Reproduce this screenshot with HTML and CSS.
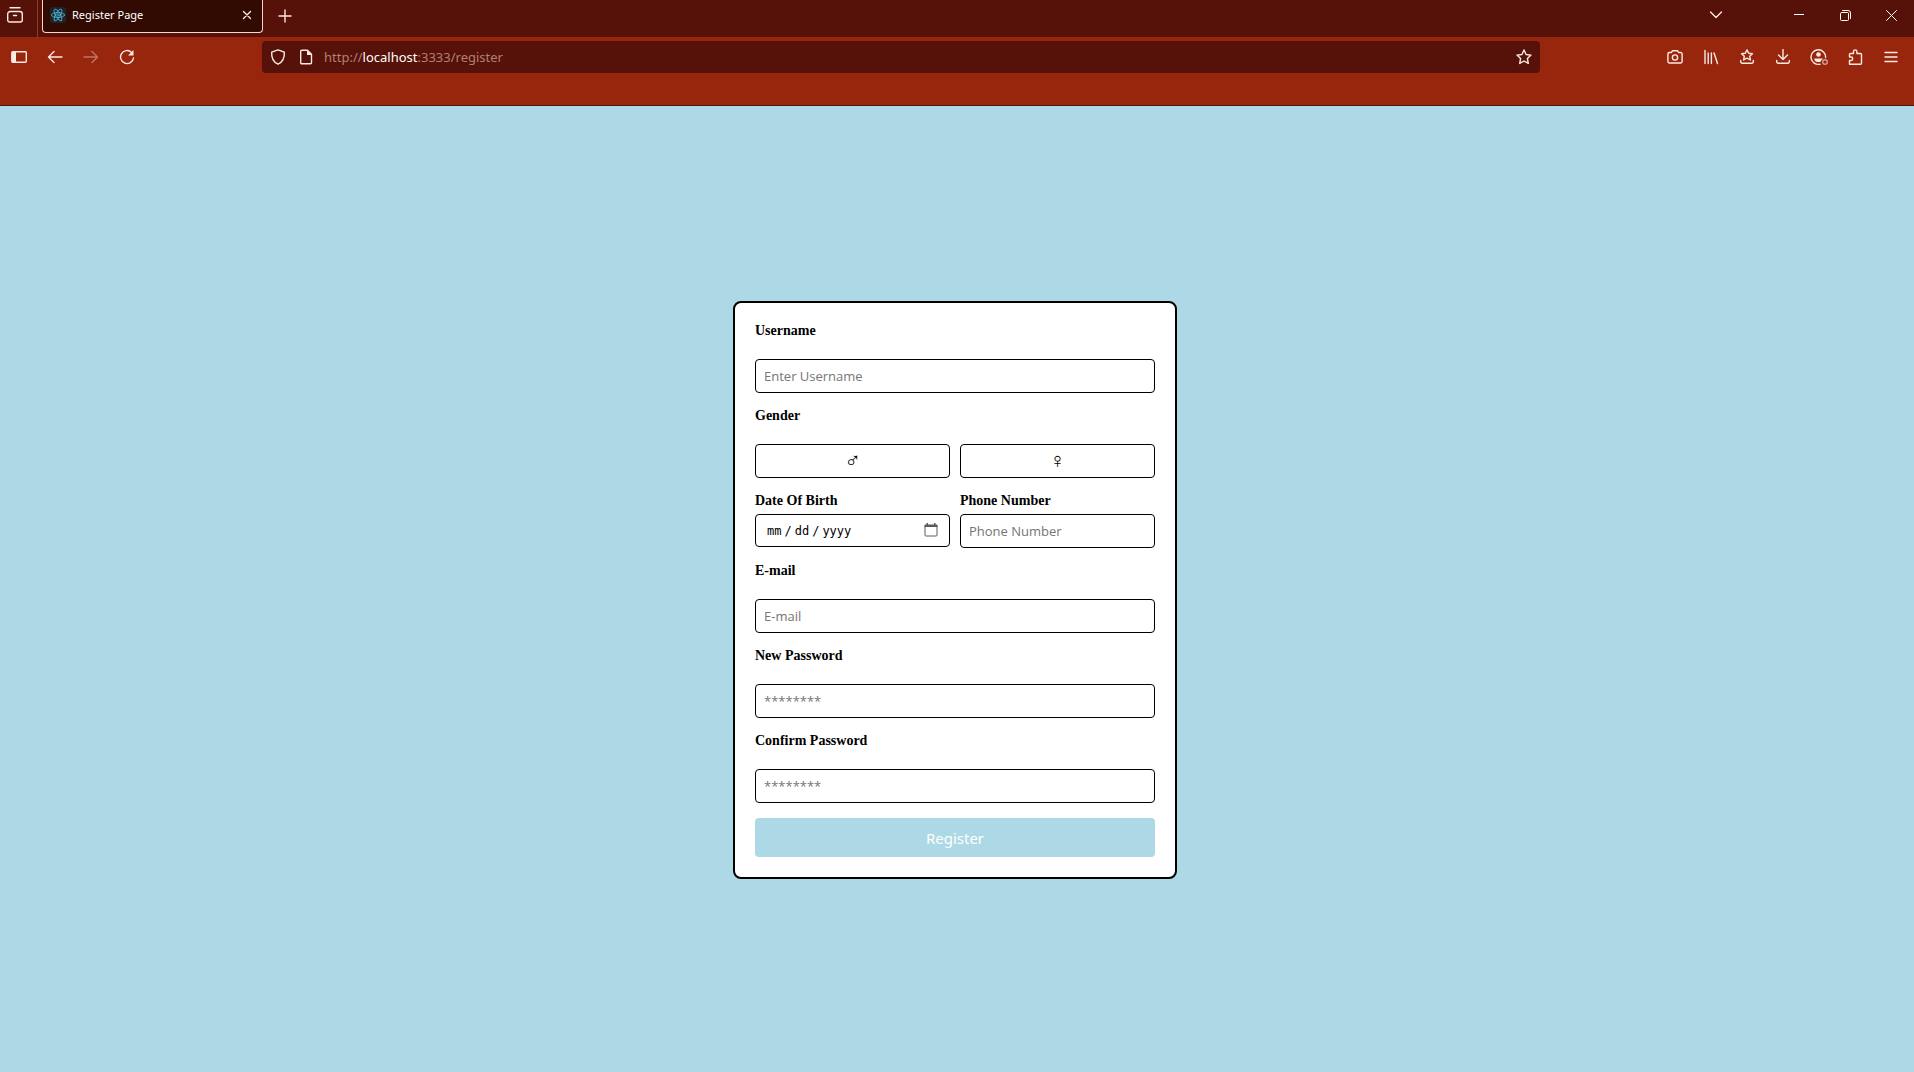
FILE: index.html
```html
<!DOCTYPE html>
<html lang="en">
<head>
<meta charset="utf-8">
<title>Register Page</title>
<link rel="stylesheet" href="styles.css">
</head>
<body>
<header class="browser">
  <div class="tabbar">
    <button class="icon-btn view-btn" aria-label="Recent browsing"><svg width="18" height="18" viewBox="0 0 18 18"><path d="M4 1.700h10M1.700 8a2.500 2.500 0 0 1 2.500-2.500h9.600A2.500 2.500 0 0 1 16.300 8v6a2 2 0 0 1-2 2H3.700a2 2 0 0 1-2-2zM7.500 9.500h3"/></svg></button>
    <div class="tab">
      <svg class="favicon" width="16" height="16" viewBox="0 0 16 16"><rect width="16" height="16" rx="2"/><ellipse cx="8" cy="8" rx="6.6" ry="2.5"/><ellipse cx="8" cy="8" rx="6.6" ry="2.5" transform="rotate(60 8 8)"/><ellipse cx="8" cy="8" rx="6.6" ry="2.5" transform="rotate(120 8 8)"/><circle cx="8" cy="8" r="1.2"/></svg>
      <span class="tab-title">Register Page</span>
      <button class="tab-close" aria-label="Close tab"><svg width="10" height="10" viewBox="0 0 10 10"><path d="M1.500 1.500l7 7M8.500 1.500l-7 7"/></svg></button>
    </div>
    <button class="icon-btn new-tab" aria-label="New tab"><svg width="14" height="14" viewBox="0 0 14 14"><path d="M7 1v12M1 7h12"/></svg></button>
    <div class="window-controls">
      <button class="all-tabs" aria-label="List all tabs"><svg width="14" height="14" viewBox="0 0 14 14"><path d="M1.500 4L7 9.500 12.500 4"/></svg></button>
      <button aria-label="Minimize"><svg class="thin" width="10" height="10" viewBox="0 0 10 10"><path d="M0 4.500h10"/></svg></button>
      <button aria-label="Restore"><svg class="thin" width="11" height="11" viewBox="0 0 11 11"><rect x=".5" y="2.500" width="8" height="8" rx="1"/><path d="M2.500.5H8A2.500 2.500 0 0 1 10.500 3v5.500"/></svg></button>
      <button aria-label="Close"><svg class="thin" width="11" height="11" viewBox="0 0 11 11"><path d="M.5.5l10 10M10.500.5l-10 10"/></svg></button>
    </div>
  </div>
  <div class="toolbar">
    <div class="tools">
      <button class="icon-btn" aria-label="Sidebar"><svg width="16" height="16" viewBox="0 0 16 16"><rect x=".8" y="2.700" width="14.500" height="10.600" rx="1"/><path class="solid" d="M1 3h4v10H1z"/></svg></button>
      <button class="icon-btn" aria-label="Back"><svg width="16" height="16" viewBox="0 0 16 16"><path d="M15 8H1.500M7 2.500L1.500 8 7 13.500"/></svg></button>
      <button class="icon-btn dim" aria-label="Forward"><svg width="16" height="16" viewBox="0 0 16 16"><path d="M1 8h13.500M9 2.500L14.500 8 9 13.500"/></svg></button>
      <button class="icon-btn" aria-label="Reload"><svg width="16" height="16" viewBox="0 0 16 16"><path d="M14.500 9A6.500 6.500 0 1 1 12.600 3.400"/><path class="solid" d="M14.500 1v5.500H9z"/></svg></button>
    </div>
    <div class="spring"></div>
    <div class="urlbar">
      <button class="url-btn" aria-label="Tracking protection"><svg width="16" height="16" viewBox="0 0 16 16"><path d="M8 .9l6.300 2.300c.4 5.500-1.700 9.800-6.300 12C3.400 13 1.300 8.700 1.700 3.200z"/></svg></button>
      <button class="url-btn" aria-label="Site information"><svg width="16" height="16" viewBox="0 0 16 16"><path d="M2.700 2.200a1 1 0 0 1 1-1H9.500L13.500 5.200v8.600a1 1 0 0 1-1 1H3.700a1 1 0 0 1-1-1z"/><path class="solid" d="M9 1v5h5z"/></svg></button>
      <div class="url">http://<span class="host">localhost</span>:3333/register</div>
      <button class="url-btn star" aria-label="Bookmark"><svg width="16" height="16" viewBox="0 0 16 16"><path d="M8 1l2.100 4.500 4.900.6-3.600 3.400.9 4.900L8 12l-4.300 2.400.9-4.900L1 6.100l4.900-.6z"/></svg></button>
    </div>
    <div class="spring"></div>
    <div class="tools">
      <button class="icon-btn" aria-label="Screenshot"><svg width="16" height="16" viewBox="0 0 16 16"><path d="M.9 5a1.500 1.500 0 0 1 1.500-1.500h2L5.500 1.700h5l1.100 1.800h2A1.500 1.500 0 0 1 15.100 5v7.500a1.500 1.500 0 0 1-1.500 1.500H2.400a1.500 1.500 0 0 1-1.500-1.500z"/><circle cx="8" cy="8.500" r="2.600"/></svg></button>
      <button class="icon-btn" aria-label="Library"><svg width="16" height="16" viewBox="0 0 16 16"><path d="M2 1.500v13M5.200 4v10.500M8.400 4v10.500M11 4l3.500 10.500"/></svg></button>
      <button class="icon-btn" aria-label="Bookmarks"><svg width="16" height="16" viewBox="0 0 16 16"><path d="M8 .9l1.700 3.300 3.700.5-2.700 2.600.7 3.700L8 9.200l-3.400 1.800.7-3.700L2.600 4.700l3.700-.5zM1.700 11.500v1.300a1.500 1.500 0 0 0 1.500 1.500h9.600a1.500 1.500 0 0 0 1.500-1.500v-1.300"/></svg></button>
      <button class="icon-btn" aria-label="Downloads"><svg width="16" height="16" viewBox="0 0 16 16"><path d="M8 .5v10M3.500 6L8 10.500 12.500 6M1.700 11.500v1.300a1.500 1.500 0 0 0 1.500 1.500h9.600a1.500 1.500 0 0 0 1.500-1.500v-1.300"/></svg></button>
      <button class="icon-btn" aria-label="Account"><svg width="18" height="18" viewBox="0 0 18 18"><path d="M10 16.200A7.300 7.300 0 1 1 15.600 9.500"/><circle class="solid" cx="8.500" cy="6.500" r="2.300"/><path class="solid" d="M4.300 10.500h8.400v.5c-1.700 1-1.500 2.500-2.700 3H7.500c-2 0-3.200-1.500-3.200-3z"/><circle class="faded" cx="15" cy="14" r="2.300"/></svg></button>
      <button class="icon-btn" aria-label="Extensions"><svg width="16" height="16" viewBox="0 0 16 16"><path d="M2.500 15.200V11.500H4a1.700 1.700 0 0 0 0-3.500H2.500V5.500a1 1 0 0 1 1-1h3V2.600a1.700 1.700 0 0 1 3.400 0v1.900h3.600a1 1 0 0 1 1 1v8.700a1 1 0 0 1-1 1z"/></svg></button>
      <button class="icon-btn" aria-label="Menu"><svg width="14" height="16" viewBox="0 0 14 16"><path d="M1 3.500h12M1 8h12M1 12.500h12"/></svg></button>
    </div>
  </div>
</header>
<main class="page">
  <form class="card">
    <div class="field">
      <label for="username">Username</label>
      <input id="username" type="text" placeholder="Enter Username">
    </div>
    <div class="field" role="group" aria-labelledby="gender">
      <span class="label" id="gender">Gender</span>
      <div class="pair">
        <button class="choice" type="button" aria-label="Male">♂</button>
        <button class="choice" type="button" aria-label="Female">♀</button>
      </div>
    </div>
    <div class="pair">
      <div class="field tight">
        <label for="dob">Date Of Birth</label>
        <div class="date-box">
          <input id="dob" type="date">
          <svg class="calendar" width="14" height="14" viewBox="0 0 14 14"><path class="outline" d="M1 3v9a1 1 0 0 0 1 1h10a1 1 0 0 0 1-1V3"/><path class="fill" d="M.4 2.500A1 1 0 0 1 1.400 1.500H2.500V0H4v1.500h6V0h1.500v1.500h1.100a1 1 0 0 1 1 1V4H.4z"/></svg>
        </div>
      </div>
      <div class="field tight">
        <label for="phone">Phone Number</label>
        <input id="phone" type="tel" placeholder="Phone Number">
      </div>
    </div>
    <div class="field">
      <label for="email">E-mail</label>
      <input id="email" type="email" placeholder="E-mail">
    </div>
    <div class="field">
      <label for="password">New Password</label>
      <input id="password" type="password" placeholder="********">
    </div>
    <div class="field">
      <label for="confirm">Confirm Password</label>
      <input id="confirm" type="password" placeholder="********">
    </div>
    <button class="submit" type="submit">Register</button>
  </form>
</main>
</body>
</html>
```
FILE: styles.css
```css
* { box-sizing: border-box; }

body {
  margin: 0;
  min-height: 100vh;
  display: flex;
  flex-direction: column;
  background: #add8e6;
  font-family: "Noto Sans", "Open Sans", sans-serif;
}

button {
  padding: 0;
  border: 0;
  background: none;
  font-family: inherit;
  color: inherit;
}

/* Browser frame */
.browser {
  background: #98260c;
  color: #fbe9e4;
  border-bottom: 1px solid #561108;
}

.browser svg {
  display: block;
  fill: none;
  stroke: currentColor;
  stroke-width: 1.4;
  stroke-linecap: round;
  stroke-linejoin: round;
}

.browser svg.thin { stroke-width: 1; color: #fff; }
.browser .solid { fill: currentColor; stroke: none; }
.browser .faded { opacity: .6; }

.browser button {
  display: flex;
  align-items: center;
  justify-content: center;
}

.tabbar {
  display: flex;
  align-items: flex-start;
  height: 37px;
  background: #561108;
}

.icon-btn {
  width: 36px;
  height: 32px;
}

.view-btn {
  width: 38px;
  height: 37px;
  padding: 0 7px 7px 0;
  border-right: 1px solid #84422f;
}

.tab {
  display: flex;
  align-items: center;
  width: 221px;
  height: 33px;
  margin-left: 4px;
  padding: 0 10px 3px 7px;
  border: 1px solid #fbd5c8;
  border-top: 0;
  border-radius: 0 0 4px 4px;
  background: #310a02;
}

.browser .favicon {
  stroke: #4cb8d6;
  stroke-width: .8;
}

.favicon rect { fill: #20232a; stroke: none; }

.tab-title {
  flex: 1;
  margin-left: 6px;
  font-size: 11px;
  line-height: 16px;
  color: #fff;
}

.tab-close { width: 10px; height: 16px; }
.new-tab { margin-left: 4px; }

.window-controls {
  display: flex;
  margin-left: auto;
}

.window-controls button {
  width: 46px;
  height: 30px;
}

.window-controls .all-tabs {
  width: 36px;
  margin-right: 42px;
}

.toolbar {
  display: flex;
  align-items: flex-start;
  height: 68px;
  padding: 4px 5px 0 1px;
}

.tools { display: flex; }
.dim { opacity: .4; }
.spring { flex: 0 1 117px; }

.urlbar {
  flex: 1;
  display: flex;
  align-items: center;
  height: 32px;
  padding: 0 2px;
  border-radius: 4px;
  background: #561108;
}

.url-btn { width: 28px; height: 28px; }

.url {
  flex: 1;
  margin-left: 4px;
  font-size: 13px;
  line-height: 20px;
  color: #b08075;
}

.host { color: #fff; }

/* Registration form */
.page {
  flex: 1;
  display: flex;
  align-items: center;
  justify-content: center;
  padding: 2px 4px 0 0;
}

.card {
  display: flex;
  flex-direction: column;
  gap: 15px;
  width: 444px;
  padding: 20px;
  border: 2px solid #000;
  border-radius: 8px;
  background: #fff;
}

.field {
  display: flex;
  flex-direction: column;
  gap: 20px;
}

.tight { gap: 5px; }

.pair {
  display: grid;
  grid-template-columns: 1fr 1fr;
  gap: 10px;
}

label,
.label {
  font: bold 14px/16px "Liberation Serif", serif;
  color: #000;
}

input,
.choice {
  width: 100%;
  height: 34px;
  margin: 0;
  padding: 0 8px;
  border: 1px solid #000;
  border-radius: 4px;
  background: #fff;
  font-family: "Open Sans", "Noto Sans", sans-serif;
  font-size: 13px;
  color: #000;
}

input::placeholder { color: #757575; }

.card .choice {
  font-family: "Liberation Sans", sans-serif;
  font-size: 22px;
  line-height: 32px;
}

.date-box { position: relative; }

.date-box input {
  display: block;
  height: 33px;
  padding: 0 10px;
  font-family: "DejaVu Sans Mono", monospace;
  font-size: 12px;
}

.date-box input::-webkit-calendar-picker-indicator { opacity: 0; }
.date-box input::-webkit-datetime-edit-text { padding: 0 2px; }

.calendar {
  position: absolute;
  top: 9px;
  right: 12px;
  pointer-events: none;
}

.calendar .outline { fill: none; stroke: #5b5b5b; }
.calendar .fill { fill: #5b5b5b; }

.submit {
  height: 39px;
  border-radius: 4px;
  background: #add8e6;
  font-size: 15px;
  color: #fff;
}
```
